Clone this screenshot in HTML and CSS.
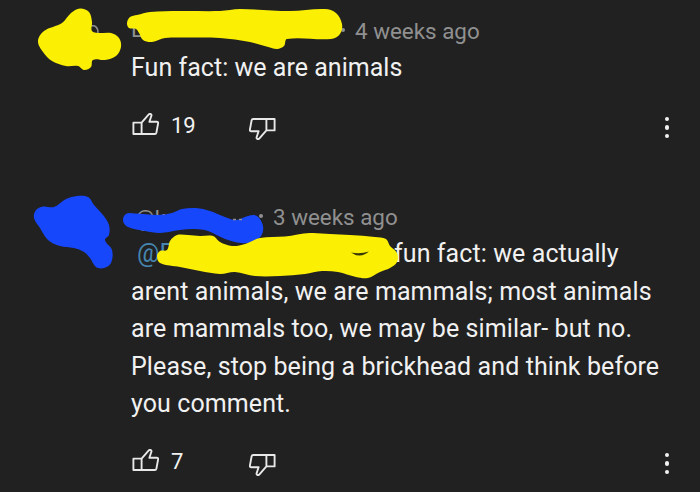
FILE: index.html
```html
<!DOCTYPE html>
<html lang="en">
<head>
    <meta charset="UTF-8">
    <meta name="viewport" content="width=device-width, initial-scale=1.0">
    <title>Comments</title>
    <link rel="stylesheet" href="styles.css">
</head>
<body>
    <svg class="symbols">
        <symbol id="thumb" viewBox="0 0 28 24">
            <path d="M2.4 9.6H10.6V21H2.4ZM10.6 9.6L18 1.2C19 0.4 20.9 1.2 20.4 2.8L18.4 8.8H25.6C26.8 8.8 27.3 9.4 27.1 10.4L25.4 19.6C25.2 20.6 24.6 21 23.8 21H10.6"/>
        </symbol>
    </svg>

    <div class="comment">
        <div class="header"><span class="name">L</span><span class="dot"></span><span class="time">4 weeks ago</span></div>
        <p class="text">Fun fact: we are animals</p>
        <div class="actions">
            <svg class="icon"><use href="#thumb"/></svg>
            <span class="count">19</span>
            <svg class="icon down"><use href="#thumb"/></svg>
            <div class="menu"><i></i><i></i><i></i></div>
        </div>
    </div>

    <div class="comment reply">
        <div class="header"><span class="name">@k</span><span class="dot"></span><span class="time">3 weeks ago</span></div>
        <p class="text"><span class="mention">@F</span>fun fact: we actually<br>
            arent animals, we are mammals; most animals<br>
            are mammals too, we may be similar- but no.<br>
            Please, stop being a brickhead and think before<br>
            you comment.</p>
        <div class="actions">
            <svg class="icon"><use href="#thumb"/></svg>
            <span class="count">7</span>
            <svg class="icon down"><use href="#thumb"/></svg>
            <div class="menu"><i></i><i></i><i></i></div>
        </div>
    </div>

    <!-- Marker scribbles over the names and avatars -->
    <svg class="scribbles" id="scribbles" viewBox="0 0 700 492">
        <path class="avatar-edge" d="M91 26C95 25 98 27 98 33M94 207L98 212"/>
    </svg>

    <script>
        const scribbles = [
            { color: "yellow", points: [[38,41],[44,31],[62,23],[71,13],[80,8.5],[89,12],[92,22],[92,31],[98,33],[111,33],[119,38],[121,47],[116,56],[105,60],[93,60],[91,67],[84,70],[78,66],[66,66],[52,61],[43,52]] },
            { color: "yellow", points: [[127,23],[130,17],[137,15],[150,12],[180,11],[220,11],[240,9],[290,11],[325,9],[336,13],[342,24],[340,34],[331,39],[287,39],[284,46],[277,49],[270,47.5],[250,42],[220,38],[190,37.5],[165,38],[152,42],[143,40],[139,33],[136,29],[129,28]] },
            { color: "blue", points: [[34,218],[36,210],[43,206.5],[54,207],[66,199],[77,196],[88,197],[94,205],[103,215],[109,225],[109,235],[105,240],[112,250],[111,263],[104,268],[96,267],[90,258],[84,252],[74,248],[60,246],[48,240],[40,228]] },
            { color: "blue", points: [[123,221],[126,214],[135,213.5],[158,215],[172,213],[182,209],[196,208],[210,211],[225,217],[236,220],[248,216],[257,216],[263,226],[261,236],[252,242],[241,243],[225,239],[208,231],[195,229],[180,230],[160,233],[145,231],[128,227]] },
            { color: "yellow", points: [[157,256],[160,251],[167,250],[170,241],[177,235],[188,235],[200,236],[213,236],[220,242],[232,246],[245,244],[260,238],[285,236.5],[310,233],[330,234],[350,235],[375,237],[386,239],[390,246],[397,253],[397,262],[390,268],[380,272],[368,278],[356,277],[338,272],[322,271],[305,274],[280,276],[255,276],[235,272],[220,274],[200,271],[180,267],[160,263]] }
        ];

        // Closed smooth curve through the points
        function smoothPath(points) {
            const n = points.length;
            let d = `M${points[0]}`;
            for (let i = 0; i < n; i++) {
                const p0 = points[(i + n - 1) % n];
                const p1 = points[i];
                const p2 = points[(i + 1) % n];
                const p3 = points[(i + 2) % n];
                const reach = Math.hypot(p2[0] - p1[0], p2[1] - p1[1]) / 3;
                const t1 = Math.hypot(p2[0] - p0[0], p2[1] - p0[1]);
                const t2 = Math.hypot(p3[0] - p1[0], p3[1] - p1[1]);
                const c1 = [p1[0] + (p2[0] - p0[0]) / t1 * reach, p1[1] + (p2[1] - p0[1]) / t1 * reach];
                const c2 = [p2[0] - (p3[0] - p1[0]) / t2 * reach, p2[1] - (p3[1] - p1[1]) / t2 * reach];
                d += `C${c1} ${c2} ${p2}`;
            }
            return d + "Z";
        }

        function addPath(className, d) {
            const path = document.createElementNS("http://www.w3.org/2000/svg", "path");
            path.setAttribute("class", className);
            path.setAttribute("d", d);
            document.getElementById("scribbles").appendChild(path);
        }

        scribbles.forEach(item => addPath(item.color, smoothPath(item.points)));
        addPath("gap", "M351 252.5Q360 254.5 369 251.5Q360 259 351 252.5Z");
        addPath("peek", "M233 219.5H236M239 219.5H242");
    </script>
</body>
</html>
```
FILE: styles.css
```css
/* General Styles */
body {
    margin: 0;
    height: 492px;
    background: #212121;
    color: #f1f1f1;
    font-family: Roboto, sans-serif;
    position: relative;
    overflow: hidden;
}

.symbols {
    display: none;
}

/* Comments */
.comment {
    padding: 11px 31px 0 131px;
}

.reply {
    padding-top: 33px;
}

.header {
    display: flex;
    align-items: center;
    height: 38px;
    line-height: 38px;
    font-size: 22.4px;
    color: #909090;
    white-space: nowrap;
}

.name {
    width: 210px;
    font-size: 22px;
}

.dot {
    width: 4px;
    height: 4px;
    margin-right: 10px;
    border-radius: 50%;
    background: #909090;
}

.time {
    padding-top: 2px;
}

.reply .name {
    width: 124px;
    padding: 6px 0 0 4px;
}

.text {
    margin: 0;
    font-size: 25px;
    line-height: 37.4px;
    letter-spacing: 0.03px;
    white-space: nowrap;
}

.reply .text {
    letter-spacing: 0.09px;
}

.mention {
    display: inline-block;
    width: 257px;
    padding-left: 6px;
    color: #4585b0;
}

/* Like, dislike and menu */
.actions {
    display: flex;
    align-items: center;
    height: 78px;
}

.icon {
    width: 28px;
    height: 24px;
    fill: none;
    stroke: #e8e8e8;
    stroke-width: 1.9;
    stroke-linejoin: round;
    overflow: visible;
}

.down {
    transform: translateY(3px) rotate(180deg);
}

.count {
    width: 78px;
    padding-left: 12px;
    font-size: 22px;
}

.menu {
    display: flex;
    flex-direction: column;
    gap: 4px;
    margin-left: auto;
    padding-top: 4px;
}

.menu i {
    width: 4.5px;
    height: 4.5px;
    border-radius: 50%;
    background: #f1f1f1;
}

/* Scribbles */
.scribbles {
    position: absolute;
    top: 0;
    left: 0;
    width: 700px;
    height: 492px;
}

.yellow {
    fill: #fbf004;
}

.blue {
    fill: #1747fa;
}

.gap {
    fill: #35350a;
}

.avatar-edge,
.peek {
    fill: none;
    stroke: #909090;
    stroke-width: 1.5;
}
```
